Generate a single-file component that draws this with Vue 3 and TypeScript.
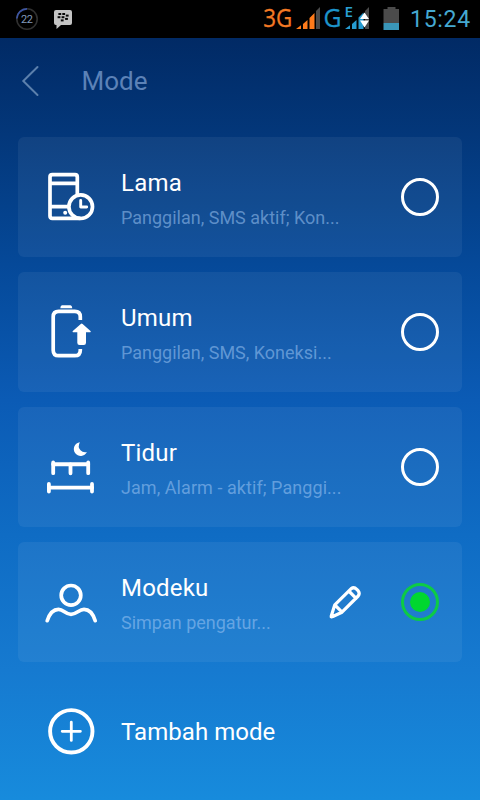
<script setup lang="ts">
import { ref } from 'vue'

type IconName = 'phone' | 'battery' | 'bed' | 'user'

interface Mode {
  id: string
  title: string
  detail: string
  icon: IconName
  editable?: boolean
}

const modes: Mode[] = [
  { id: 'lama', title: 'Lama', detail: 'Panggilan, SMS aktif; Kon...', icon: 'phone' },
  { id: 'umum', title: 'Umum', detail: 'Panggilan, SMS, Koneksi...', icon: 'battery' },
  { id: 'tidur', title: 'Tidur', detail: 'Jam, Alarm - aktif; Panggi...', icon: 'bed' },
  { id: 'modeku', title: 'Modeku', detail: 'Simpan pengatur...', icon: 'user', editable: true },
]

const selected = ref('modeku')
</script>

<template>
  <div class="screen">
    <div class="status">
      <svg class="status-left" width="80" height="38" viewBox="0 0 80 38">
        <circle cx="27" cy="19" r="10.2" fill="none" stroke="#303030" stroke-width="1.6" />
        <path d="M16.8 18.5A10.2 10.2 0 0 1 27 8.8" fill="none" stroke="#3c55a4" stroke-width="1.7" />
        <text x="21" y="23" font-size="11" textLength="12" fill="#8199bd">22</text>
        <path d="M56 10h14q2 0 2 2v11q0 2-2 2h-9l-4.5 4v-4H56q-2 0-2-2V12q0-2 2-2z" fill="#c4c4c4" />
        <g fill="#080808">
          <rect x="58.4" y="13" width="2.8" height="2" /><rect x="62.3" y="13" width="2.8" height="2" />
          <rect x="57.6" y="16.2" width="2.8" height="2" /><rect x="61.6" y="16.2" width="2.8" height="2" />
          <rect x="65.8" y="14.6" width="2.8" height="2" /><rect x="65.1" y="17.9" width="2.8" height="2" />
          <rect x="60.8" y="19.4" width="2.8" height="2" />
        </g>
      </svg>
      <svg class="status-right" width="150" height="38" viewBox="255 0 150 38">
        <text x="263.300" y="27" font-size="25.500" textLength="29" lengthAdjust="spacingAndGlyphs" fill="#f37a24" stroke="#f37a24" stroke-width="0.300" class="net">3G</text>
        <path d="M296 29l5-3.700V29zM303 24l4.500-4V29H303zM309.500 18l5-5v16h-5z" fill="#ff7b1b" />
        <path d="M316 11l4-4v22h-4z" fill="#4a4a4a" />
        <text x="323.500" y="27" font-size="25.500" textLength="18" lengthAdjust="spacingAndGlyphs" fill="#1d94ca" stroke="#1d94ca" stroke-width="0.300" class="net">G</text>
        <text x="344.500" y="17" font-size="15" textLength="8.500" lengthAdjust="spacingAndGlyphs" fill="#2ba0d4" class="net bold">E</text>
        <path d="M345 29l5-3.700V29zM352 24l4.500-4V29H352zM358.500 17.500l5-5v16.500h-5z" fill="#269bd0" />
        <path d="M365 11l4-4v22h-4z" fill="#4a4a4a" />
        <path d="M364.500 12.500l4.500 6.500h-9zM364.500 27.500l4.500-7h-9z" fill="#fff" />
        <path d="M387.500 7h8v2h3.500v14h-15.500V9h4z" fill="#4b4b4b" />
        <path d="M383.500 23H399v7h-15.500z" fill="#3a96b8" />
      </svg>
      <span class="clock">15:24</span>
    </div>

    <header class="header">
      <svg class="back" width="20" height="32" viewBox="0 0 20 32">
        <path d="M17.500 2L3.300 16l14.200 14" />
      </svg>
      <h1>Mode</h1>
    </header>

    <main class="list">
      <section v-for="m in modes" :key="m.id" class="card" @click="selected = m.id">
        <svg class="icon" width="60" height="60" viewBox="0 0 60 60">
          <g v-if="m.icon === 'phone'">
            <path d="M36.300 27V10q0-2.300-2.300-2.300H11.300Q9 7.700 9 10v39q0 2.300 2.300 2.300H39M9 16.300h27M9 39.700h18" />
            <circle cx="24.200" cy="45.700" r="2" class="solid" />
            <circle cx="39.700" cy="39.700" r="11.800" />
            <path d="M39.700 33.500V40h6" stroke-width="2.900" />
          </g>
          <g v-else-if="m.icon === 'battery'">
            <path d="M21 3.300h8.500q1.500 0 1.800 3h-12q.2-3 1.700-3z" class="solid" />
            <path d="M39.300 18v-3.200q0-5.500-5.500-5.500H17.700q-5.500 0-5.500 5.500v33.400q0 5.500 5.500 5.500h16.100q5.500 0 5.500-5.500V47" stroke-linecap="butt" />
            <path d="M39.800 21.900q.9-.9 1.800 0l7.900 7.200q.8 1.200-.4 1.200H45v10.500q0 2.200-2.200 2.200h-4.300q-2.200 0-2.200-2.200V30.300h-4.100q-1.200 0-.4-1.200z" class="solid" />
          </g>
          <g v-else-if="m.icon === 'bed'">
            <path d="M38.900 5.200A6.900 6.900 0 1 0 45.900 15.100Q42 16 39.500 13.300Q36.300 9.700 38.900 5.200z" class="solid" />
            <path d="M12.200 25.500v10.700M47.200 25.500v10.700M29.500 27.300v9M7.900 47v7.600M51 47v7.600" stroke-width="3.800" />
            <path d="M12.200 27.200h35M7.900 50.600H51" stroke-width="3.900" />
          </g>
          <g v-else>
            <circle cx="30" cy="23.300" r="9.800" />
            <path d="M6.200 48.700C8.500 41.500 12 37.300 17.500 37.300C22.500 37.300 24.500 42.300 30 42.300S38 37.300 43 37.300C48.500 37.300 52 41.500 54.200 48.700" />
          </g>
        </svg>
        <div class="copy">
          <h2>{{ m.title }}</h2>
          <p :class="m.id">{{ m.detail }}</p>
        </div>
        <svg v-if="m.editable" class="pencil" width="40" height="40" viewBox="0 0 40 40">
          <path d="M6.200 34.200L9.800 22.800L26.200 6.600Q29 4.600 31.800 7.300L33 8.600Q35.300 11.500 33.200 14L17 30.200L7.800 34.500Q6 35.300 6.200 34.200zM9.800 22.800L17 30.200M23.800 9l7.300 7.300" />
        </svg>
        <span class="radio" :class="{ on: selected === m.id }"></span>
      </section>
      <div class="add">
        <svg class="icon" width="60" height="60" viewBox="0 0 60 60">
          <circle cx="30.300" cy="30.300" r="21.200" stroke-width="3.900" />
          <path d="M30.300 21.200v18.200M21.200 30.300h18.200" stroke-width="2.800" />
        </svg>
        <h2>Tambah mode</h2>
      </div>
    </main>
  </div>
</template>

<style>
body {
  background: #000;
}
</style>

<style scoped>
.screen {
  width: 480px;
  height: 800px;
  display: flex;
  flex-direction: column;
  overflow: hidden;
  font-family: Roboto, "Liberation Sans", sans-serif;
  background: linear-gradient(to bottom, #012a65 38px, #03377a 135px, #054999 265px, #0b5bb5 400px, #0f6cc4 535px, #167ad0 670px, #178bdc 800px);
}
.status {
  height: 38px;
  flex: none;
  display: flex;
  background: #000;
}
.status-right {
  margin-left: auto;
}
.net {
  font-family: "Open Sans", sans-serif;
}
.bold {
  font-weight: 600;
}
.clock {
  width: 75px;
  padding-left: 5px;
  box-sizing: border-box;
  font-size: 23px;
  line-height: 39px;
  letter-spacing: 0.7px;
  color: #45a9d2;
}
.header {
  height: 99px;
  flex: none;
  display: flex;
  align-items: center;
  box-sizing: border-box;
  padding: 0 0 14px 20px;
}
.back path {
  fill: none;
  stroke: #5c80ac;
  stroke-width: 2;
  stroke-linecap: round;
}
h1,
h2,
p {
  margin: 0;
  font-weight: 400;
  white-space: nowrap;
}
h1 {
  margin-left: 41.500px;
  font-size: 26px;
  line-height: 32px;
  color: #5c82b7;
}
.list {
  display: flex;
  flex-direction: column;
  gap: 15px;
  padding: 0 18px;
}
.card {
  height: 120px;
  box-sizing: border-box;
  display: flex;
  align-items: center;
  padding: 0 23px;
  border-radius: 6px;
  background: rgba(255, 255, 255, 0.06);
}
.icon {
  flex: none;
}
.icon,
.pencil {
  fill: none;
  stroke: #fff;
  stroke-width: 3.700;
  stroke-linecap: round;
  stroke-linejoin: round;
}
.pencil {
  flex: none;
  margin-right: 36px;
  stroke-width: 3.200;
}
.solid {
  fill: #fff;
  stroke: none;
}
.copy {
  flex: 1;
  min-width: 0;
  padding: 4px 0 0 20px;
}
h2 {
  font-size: 24px;
  line-height: 32px;
  letter-spacing: 0.2px;
  color: #fff;
}
p {
  margin-top: 6px;
  font-size: 18px;
  line-height: 26px;
  color: rgba(160, 200, 245, 0.550);
}
.tidur {
  letter-spacing: 0.060px;
}
.radio {
  width: 38px;
  height: 38px;
  flex: none;
  box-sizing: border-box;
  display: grid;
  place-items: center;
  border: 3px solid #fff;
  border-radius: 50%;
}
.radio.on {
  border-color: #0dcb45;
}
.radio.on::after {
  content: "";
  width: 20px;
  height: 20px;
  border-radius: 50%;
  background: #00d72f;
}
.add {
  height: 108px;
  display: flex;
  align-items: center;
  padding-left: 23px;
}
.add h2 {
  padding: 2px 0 0 20px;
  letter-spacing: 0.050px;
}
</style>
